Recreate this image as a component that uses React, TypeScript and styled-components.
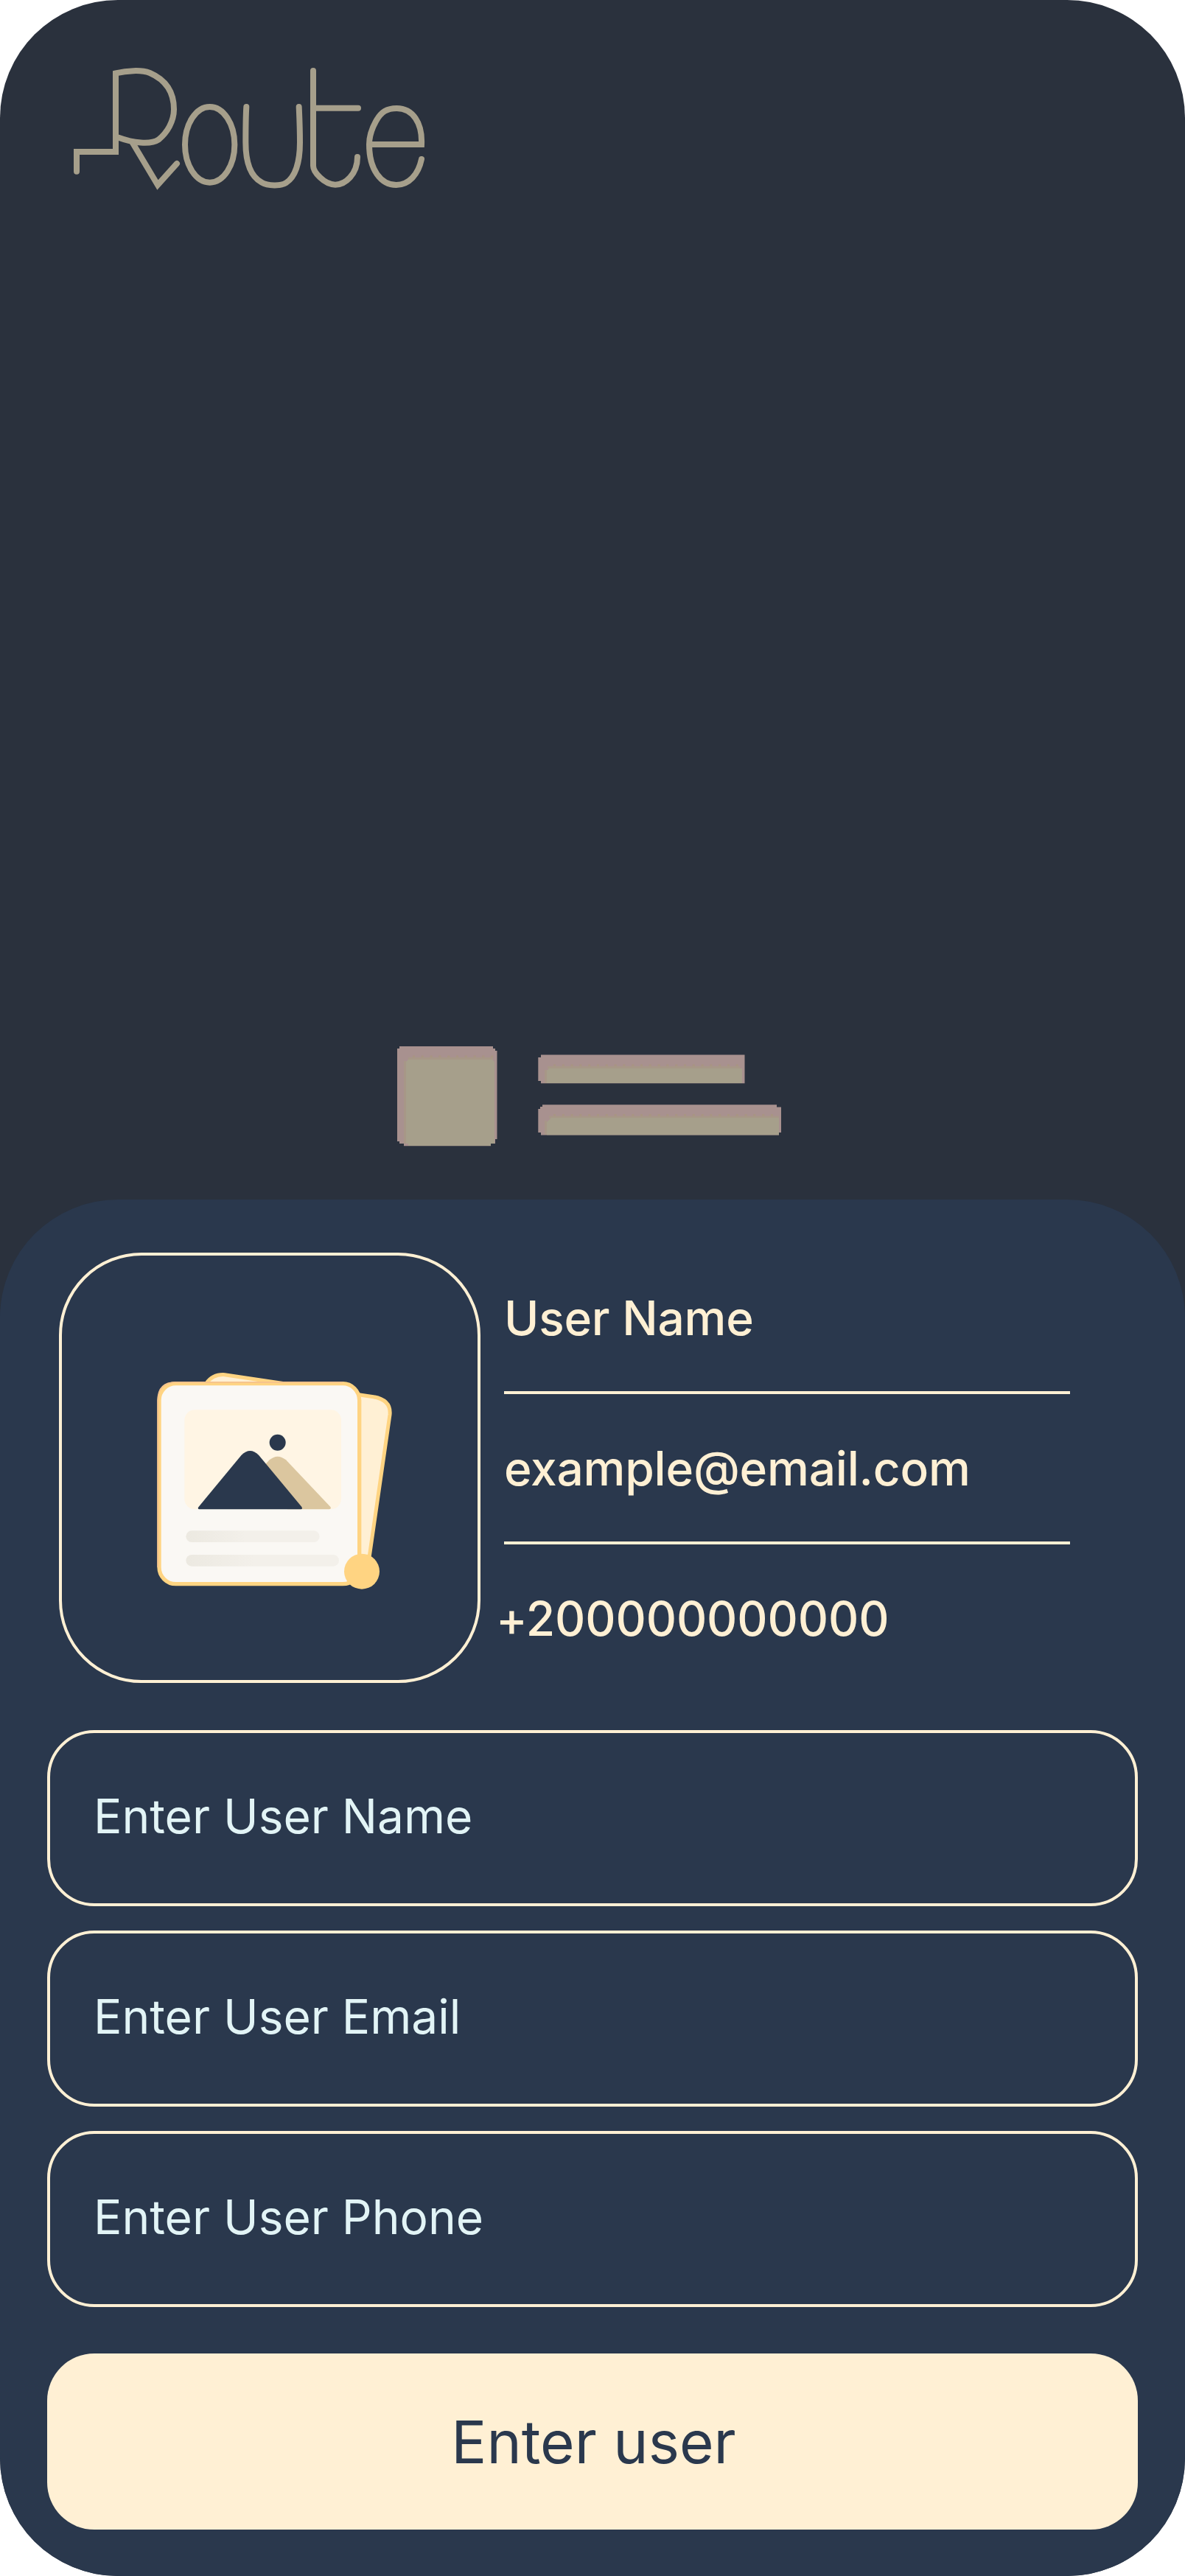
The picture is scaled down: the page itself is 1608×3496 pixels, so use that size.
import React from "react";
import styled, { createGlobalStyle } from "styled-components";

const color = {
  backdrop: "#2a313d",
  sheet: "#2a384d",
  cream: "#fff0d4",
  ice: "#e2f4f6",
  khaki: "#a69f8b",
  rose: "#a8918f",
  gold: "#ffd482",
};

const GlobalStyle = createGlobalStyle`
  body {
    margin: 0;
    background: #fff;
    font-family: Inter, sans-serif;
  }
`;

const Screen = styled.main`
  display: flex;
  flex-direction: column;
  width: 1608px;
  height: 3496px;
  overflow: hidden;
  border-radius: 160px;
  background: ${color.backdrop};
`;

const Header = styled.header`
  flex: none;
  height: 1390px;
  padding: 70px 80px 0;
  box-sizing: border-box;
`;

const Preview = styled.section`
  flex: none;
  display: flex;
  height: 238px;
  padding-left: 500px;
`;

const Sheet = styled.section`
  flex: 1;
  display: flex;
  flex-direction: column;
  padding: 72px 64px 0;
  border-radius: 160px 160px 0 0;
  background: ${color.sheet};
`;

const Profile = styled.div`
  display: flex;
  gap: 32px;
  height: 584px;
  padding-left: 16px;
  margin-bottom: 64px;
`;

const Avatar = styled.div`
  box-sizing: border-box;
  width: 572px;
  height: 584px;
  border: 4px solid ${color.cream};
  border-radius: 112px;
  padding: 136px 0 0 106px;
`;

const Details = styled.div`
  width: 768px;
  padding-top: 37px;
`;

const Detail = styled.div<{ $shift?: number }>`
  box-sizing: border-box;
  height: 204px;
  padding-top: 13px;
  margin-left: ${(p) => p.$shift ?? 0}px;
  line-height: 78px;
  font-size: 64px;
  font-weight: 500;
  letter-spacing: -0.2px;
  color: ${color.cream};
  white-space: nowrap;

  &:last-child {
    height: 91px;
    letter-spacing: -0.1px;
  }
`;

const Rule = styled.hr`
  height: 4px;
  margin: 60px 0 0;
  border: 0;
  background: ${color.cream};
`;

const Form = styled.form`
  display: flex;
  flex-direction: column;
  gap: 33px;
`;

const Field = styled.input`
  box-sizing: border-box;
  width: 1480px;
  height: 239px;
  padding: 0 60px 6px 59px;
  border: 4px solid ${color.cream};
  border-radius: 64px;
  outline: 0;
  background: transparent;
  font: 400 64px Inter, sans-serif;
  color: ${color.ice};

  &::placeholder {
    color: ${color.ice};
    opacity: 1;
  }
`;

const Submit = styled.button`
  width: 1480px;
  height: 239px;
  margin-top: 30px;
  padding: 0 0 0 3px;
  border: 0;
  border-radius: 64px;
  background: ${color.cream};
  font: 400 80px Inter, sans-serif;
  color: ${color.sheet};
`;

const Logo = () => (
  <svg width="520" height="210" viewBox="0 0 1560 630" fill="none" stroke={color.khaki} strokeWidth="24" strokeLinecap="round">
    <path d="M72 488V408H231V88C275 78 335 73 370 87C430 113 468 160 468 235C468 285 440 330 406 358C372 381 300 371 243 350" />
    <path d="M300 372L402 543L480 456" />
    <ellipse cx="614" cy="379" rx="101" ry="154" />
    <path d="M763 225C760 270 760 310 760 370C760 455 782 509 824 532C850 548 905 548 925 534C962 510 981 450 981 370C981 310 979 270 977 225" />
    <path d="M1035 78V465C1035 490 1080 542 1125 542C1165 542 1215 500 1215 429M1035 230H1218" />
    <path d="M1263 378H1476C1480 290 1440 231 1375 231C1335 231 1312 245 1290 284C1270 320 1263 345 1263 378C1263 480 1310 543 1373 543C1425 543 1463 500 1476 438" />
  </svg>
);

const PreviewBlocks = () => (
  <svg width="600" height="200" viewBox="0 0 600 200">
    <g fill={color.rose}>
      <path d="M42 30H169V33H172V36H174.500V156H172V162H166V165.300H48V162H42V159H39V33H42Z" />
      <path d="M234 41.500H510.500V80.300H234V77H230.300V45H234Z" />
      <path d="M236 109.300H554V112.500H560V147H557V150.500H234V147H230.300V115H233V112H236Z" />
    </g>
    <g stroke="#a8967f" strokeWidth="3" strokeDasharray="3 8.800" opacity="0.8">
      <path d="M60 44H171" />
      <path d="M251 56H507" />
      <path d="M251 123.500H557" />
    </g>
    <g stroke="#a79787" strokeWidth="3">
      <path d="M54 46.500H169M49.500 50V162" />
      <path d="M243 58.500H504M240.500 62V80" />
      <path d="M245 126H557M240.500 131V150" />
    </g>
    <g fill={color.khaki}>
      <path d="M57 48H168L171 51V162H166V165H54V162H51V51L54 48Z" />
      <path d="M245 60H507V80H242V63L245 60Z" />
      <path d="M248 127H557V150.300H242V133L245 130Z" />
    </g>
  </svg>
);

const PhotoStack = () => (
  <svg width="360" height="340" viewBox="0 0 1080 1020">
    <defs>
      <linearGradient id="line" x1="0" x2="1">
        <stop offset="0" stopColor="#ece9e1" />
        <stop offset="0.45" stopColor="#f3f0ea" />
      </linearGradient>
    </defs>
    <path d="M270 112Q296 74 345 77L950 167Q1023 180 1017 240L934 815L850 830Z" fill="#fff0d4" stroke={color.gold} strokeWidth="15" />
    <rect x="78" y="113" width="815" height="816" rx="68" fill="#faf8f4" stroke={color.gold} strokeWidth="16" />
    <path d="M73 861V181Q73 108 146 108H825" fill="none" stroke="#f6c48c" strokeWidth="6" />
    <rect x="181" y="220" width="638" height="405" rx="42" fill="#fff5e4" />
    <path d="M500 453L527 424Q560 396 594 424L775 615Q780 625 770 625H600Z" fill="#dbc69f" />
    <path d="M237 617L413 404Q448 370 483 404L658 615Q663 625 655 625H242Q234 625 237 617Z" fill={color.sheet} />
    <circle cx="560" cy="353" r="33" fill={color.sheet} />
    <rect x="187" y="712" width="544" height="47" rx="23.500" fill="url(#line)" />
    <rect x="187" y="810" width="623" height="47" rx="23.500" fill="url(#line)" />
    <circle cx="903" cy="878" r="72" fill={color.gold} />
  </svg>
);

export default function App() {
  return (
    <>
      <GlobalStyle />
      <Screen>
        <Header>
          <Logo />
        </Header>
        <Preview>
          <PreviewBlocks />
        </Preview>
        <Sheet>
          <Profile>
            <Avatar>
              <PhotoStack />
            </Avatar>
            <Details>
              <Detail>
                User Name
                <Rule />
              </Detail>
              <Detail>
                example@email.com
                <Rule />
              </Detail>
              <Detail $shift={-11}>+200000000000</Detail>
            </Details>
          </Profile>
          <Form>
            <Field placeholder="Enter User Name" />
            <Field placeholder="Enter User Email" />
            <Field placeholder="Enter User Phone" />
            <Submit type="button">Enter user</Submit>
          </Form>
        </Sheet>
      </Screen>
    </>
  );
}
